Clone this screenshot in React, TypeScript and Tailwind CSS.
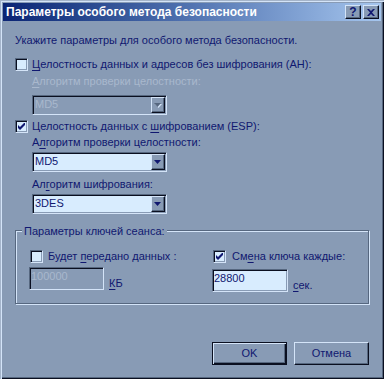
import React from 'react';

const sunken =
  'border border-t-[#56677f] border-l-[#56677f] border-r-[#d4e4f8] border-b-[#d4e4f8] shadow-[inset_1px_1px_0_#0a0f20,inset_-1px_-1px_0_#889bb5] p-[1px]';
const raised =
  'border border-t-[#d4e4f8] border-l-[#d4e4f8] border-r-[#0a0f20] border-b-[#0a0f20] shadow-[inset_-1px_-1px_0_#56677f]';

const Check: React.FC<{ checked?: boolean }> = ({ checked }) => (
  <span className={`${sunken} w-[13px] h-[13px] shrink-0 bg-[#d8ecfe] flex items-center justify-center`}>
    {checked && (
      <svg width="7" height="7" viewBox="0 0 7 7" className="block">
        <path d="M0 2 L2 4 L7 -1 L7 2 L2 7 L0 5 Z" fill="#101870" />
      </svg>
    )}
  </span>
);

const Arrow: React.FC<{ disabled?: boolean }> = ({ disabled }) => (
  <span className={`${raised} w-[14px] h-full bg-[#889bb5] flex items-center justify-center`}>
    <svg width="8" height="5" viewBox="0 0 8 5" className="block">
      {disabled && <polygon points="1,1 8,1 4.5,5" fill="#d4e4f8" />}
      <polygon points="0,0 7,0 3.5,4" fill={disabled ? '#56677f' : '#101870'} />
    </svg>
  </span>
);

const Combo: React.FC<{ value: string; disabled?: boolean }> = ({ value, disabled }) => (
  <div
    className={`${sunken} ml-[17px] w-[135px] h-[20px] flex ${disabled ? 'bg-[#889bb5] text-[#a9b8cd]' : 'bg-[#d8ecfe]'}`}
  >
    <span className="flex-1 pl-[1px] pt-[1px]">{value}</span>
    <Arrow disabled={disabled} />
  </div>
);

const Edit: React.FC<{ value: string; disabled?: boolean; width: string }> = ({ value, disabled, width }) => (
  <div
    className={`${sunken} ${width} h-[23px] pt-[2px] pl-[1px] ${disabled ? 'bg-[#889bb5] text-[#a9b8cd]' : 'bg-[#d8ecfe]'}`}
  >
    {value}
  </div>
);

const Key: React.FC<{ children: React.ReactNode }> = ({ children }) => (
  <span className="underline underline-offset-[2px]">{children}</span>
);

export default function App() {
  return (
    <div className="w-[384px] h-[379px] flex flex-col bg-[#889bb5] text-[#101870] text-[11px] leading-[13px] font-['Liberation_Sans',Arial,sans-serif] shadow-[inset_1px_1px_0_#a4b4ca,inset_2px_2px_0_#d4e4f8,inset_-1px_-1px_0_#0a0f20,inset_-2px_-2px_0_#56677f]">
      <div className="mx-[3px] mt-[3px] h-[18px] flex items-center bg-linear-to-r from-[#0b2474] to-[#a6c6ee] pl-[3px] pr-[2px]">
        <span className="flex-1 text-white font-bold text-[12px] leading-[18px]">
          Параметры особого метода безопасности
        </span>
        <span className={`${raised} w-[16px] h-[14px] bg-[#889bb5] flex items-center justify-center font-bold text-[12px] leading-[12px] text-[#101870]`}>
          ?
        </span>
        <span className={`${raised} ml-[2px] w-[16px] h-[14px] bg-[#889bb5] flex items-center justify-center`}>
          <svg width="8" height="7" viewBox="0 0 8 7" className="block">
            <path d="M0 0 H2 L4 2 L6 0 H8 L5 3.5 L8 7 H6 L4 5 L2 7 H0 L3 3.5 Z" fill="#101870" />
          </svg>
        </span>
      </div>

      <div className="flex flex-col pl-[15px]">
        <div className="mt-[13px]">Укажите параметры для особого метода безопасности.</div>

        <label className="mt-[11px] flex items-start gap-[4px]">
          <Check />
          <span>
            <Key>Ц</Key>елостность данных и адресов без шифрования (AH):
          </span>
        </label>
        <div className="mt-[4px] ml-[17px] text-[#a9b8cd]">
          <Key>А</Key>лгоритм проверки целостности:
        </div>
        <div className="mt-[7px]">
          <Combo value="MD5" disabled />
        </div>

        <label className="mt-[5px] flex items-start gap-[4px]">
          <Check checked />
          <span>
            Целостность данных с <Key>ш</Key>ифрованием (ESP):
          </span>
        </label>
        <div className="mt-[3px] ml-[17px]">
          А<Key>л</Key>горитм проверки целостности:
        </div>
        <div className="mt-[3px]">
          <Combo value="MD5" />
        </div>
        <div className="mt-[6px] ml-[17px]">
          Ал<Key>г</Key>оритм шифрования:
        </div>
        <div className="mt-[3px]">
          <Combo value="3DES" />
        </div>

        <div className="relative mt-[16px] w-[354px] h-[74px] border border-[#56677f] shadow-[1px_1px_0_#d4e4f8,inset_1px_1px_0_#d4e4f8] flex pt-[19px]">
          <span className="absolute left-[6px] top-[-6px] px-[2px] bg-[#889bb5]">Параметры ключей сеанса:</span>

          <div className="w-[197px] pl-[14px] flex flex-col">
            <label className="flex items-start gap-[5px]">
              <Check />
              <span>
                Будет <Key>п</Key>ередано данных :
              </span>
            </label>
            <div className="mt-[4px] -ml-[1px] flex items-end gap-[5px]">
              <Edit value="100000" disabled width="w-[75px]" />
              <span>
                <Key>К</Key>Б
              </span>
            </div>
          </div>

          <div className="flex flex-col">
            <label className="flex items-start gap-[6px]">
              <Check checked />
              <span>
                См<Key>е</Key>на ключа каждые:
              </span>
            </label>
            <div className="mt-[6px] -ml-[1px] flex items-end gap-[5px]">
              <Edit value="28800" width="w-[76px]" />
              <span>
                <Key>с</Key>ек.
              </span>
            </div>
          </div>
        </div>
      </div>

      <div className="mt-[38px] pr-[15px] flex justify-end gap-[7px]">
        <button className="w-[75px] h-[23px] bg-[#889bb5] border border-[#0a0f20] shadow-[inset_1px_1px_0_#d4e4f8,inset_-1px_-1px_0_#0a0f20,inset_-2px_-2px_0_#56677f] text-[#101870]">
          OK
        </button>
        <button className={`${raised} w-[75px] h-[23px] bg-[#889bb5] text-[#101870]`}>Отмена</button>
      </div>
    </div>
  );
}
